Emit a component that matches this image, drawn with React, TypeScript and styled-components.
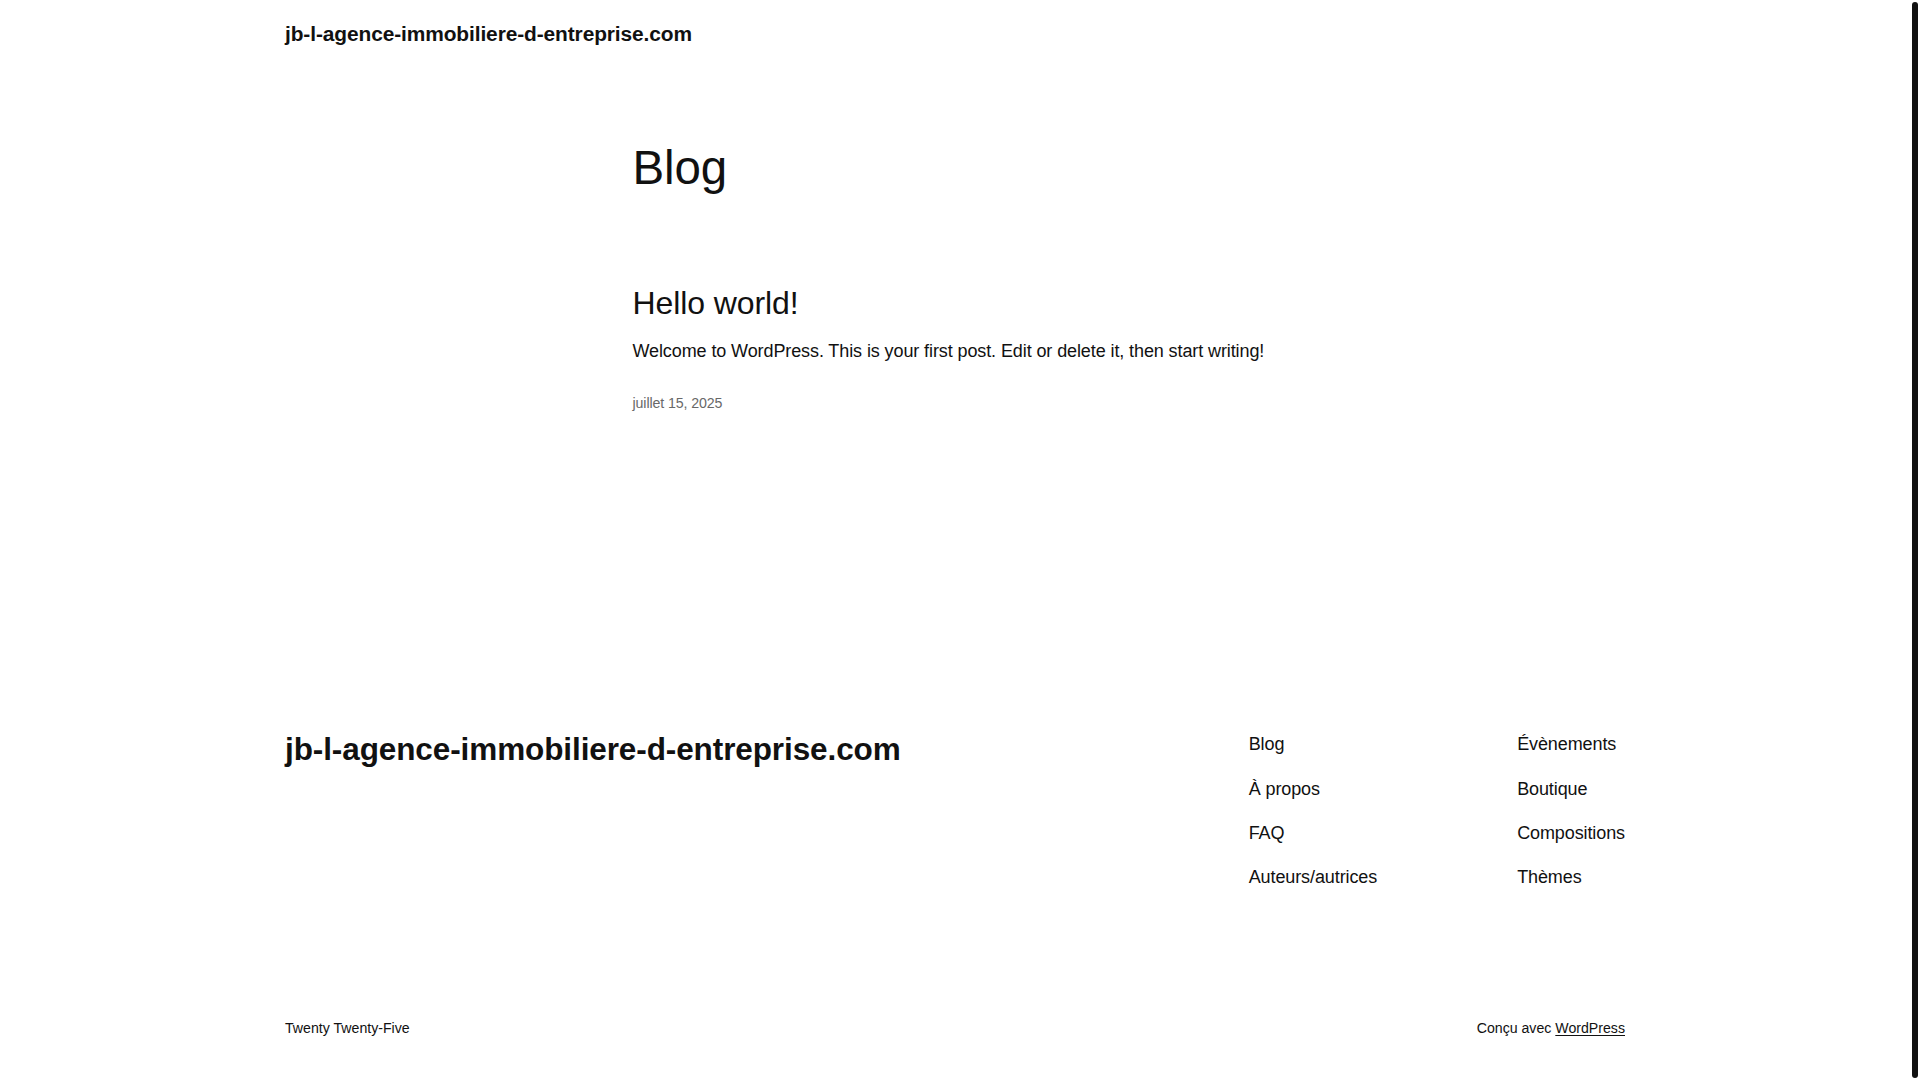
import React from "react";
import styled, { createGlobalStyle } from "styled-components";

const GlobalStyle = createGlobalStyle`
	html, body {
		margin: 0;
		padding: 0;
		background: #ffffff;
		overflow: hidden;
	}
	body {
		font-family: "Liberation Sans", Arial, sans-serif;
		color: #111111;
		letter-spacing: -0.1px;
		-webkit-font-smoothing: antialiased;
	}
	a {
		color: inherit;
	}
`;

const Page = styled.div`
	display: flex;
	flex-direction: column;
	min-height: 1080px;
	margin-right: 10px;
`;

const Wide = styled.div`
	width: 1340px;
	margin: 0 auto;
`;

const Narrow = styled.div`
	width: 645px;
	margin: 0 auto;
`;

const Header = styled.header`
	padding: 20px 0;
`;

const SiteTitle = styled.a<{ size: number }>`
	display: block;
	font-size: ${(p) => p.size}px;
	line-height: ${(p) => (p.size > 25 ? 1.2 : 1.3)};
	font-weight: 700;
	text-decoration: none;
	white-space: nowrap;
`;

const Main = styled.main`
	padding-top: 72px;
`;

const PageTitle = styled.h1`
	margin: 0;
	font-size: 47.5px;
	line-height: 1.2;
	font-weight: 400;
`;

const Post = styled.article`
	display: flex;
	flex-direction: column;
	padding-top: 87.5px;
`;

const PostTitle = styled.h2`
	margin: 0;
	font-size: 32px;
	line-height: 1.2;
	font-weight: 400;
`;

const Excerpt = styled.p`
	margin: 15px 0 0;
	font-size: 18px;
	line-height: 1.6;
`;

const PostDate = styled.time`
	margin-top: 28.5px;
	font-size: 14.2px;
	line-height: 1.4;
	color: #686868;
`;

const Footer = styled.footer`
	padding-top: 317px;
`;

const FooterTop = styled.div`
	display: flex;
	justify-content: space-between;
	align-items: flex-start;
`;

const NavGroup = styled.div`
	display: flex;
	gap: 140px;
`;

const NavColumn = styled.nav`
	display: flex;
	flex-direction: column;
	gap: 17.4px;
`;

const NavLink = styled.a`
	font-size: 18px;
	line-height: 27px;
	text-decoration: none;
	white-space: nowrap;
`;

const FooterBottom = styled.div`
	display: flex;
	justify-content: space-between;
	padding-top: 127.5px;
	font-size: 14.15px;
	line-height: 1.4;
	letter-spacing: 0;
`;

const Credit = styled.span`
	a {
		text-decoration: underline;
		text-underline-offset: 2px;
	}
`;

const ScrollThumb = styled.div`
	position: fixed;
	top: 2px;
	bottom: 2px;
	right: 2px;
	width: 6px;
	border-radius: 3px;
	background: #111111;
`;

const leftLinks = ["Blog", "À propos", "FAQ", "Auteurs/autrices"];
const rightLinks = ["Évènements", "Boutique", "Compositions", "Thèmes"];

export default function App() {
	return (
		<>
			<GlobalStyle />
			<Page>
				<Header>
					<Wide>
						<SiteTitle size={20.9} href="#">
							jb-l-agence-immobiliere-d-entreprise.com
						</SiteTitle>
					</Wide>
				</Header>
				<Main>
					<Narrow>
						<PageTitle>Blog</PageTitle>
						<Post>
							<PostTitle>Hello world!</PostTitle>
							<Excerpt>Welcome to WordPress. This is your first post. Edit or delete it, then start writing!</Excerpt>
							<PostDate>juillet 15, 2025</PostDate>
						</Post>
					</Narrow>
				</Main>
				<Footer>
					<Wide>
						<FooterTop>
							<SiteTitle size={31.5} href="#">
								jb-l-agence-immobiliere-d-entreprise.com
							</SiteTitle>
							<NavGroup>
								<NavColumn>
									{leftLinks.map((l) => (
										<NavLink key={l} href="#">
											{l}
										</NavLink>
									))}
								</NavColumn>
								<NavColumn>
									{rightLinks.map((l) => (
										<NavLink key={l} href="#">
											{l}
										</NavLink>
									))}
								</NavColumn>
							</NavGroup>
						</FooterTop>
						<FooterBottom>
							<span>Twenty Twenty-Five</span>
							<Credit>
								Conçu avec <a href="#">WordPress</a>
							</Credit>
						</FooterBottom>
					</Wide>
				</Footer>
			</Page>
			<ScrollThumb />
		</>
	);
}
